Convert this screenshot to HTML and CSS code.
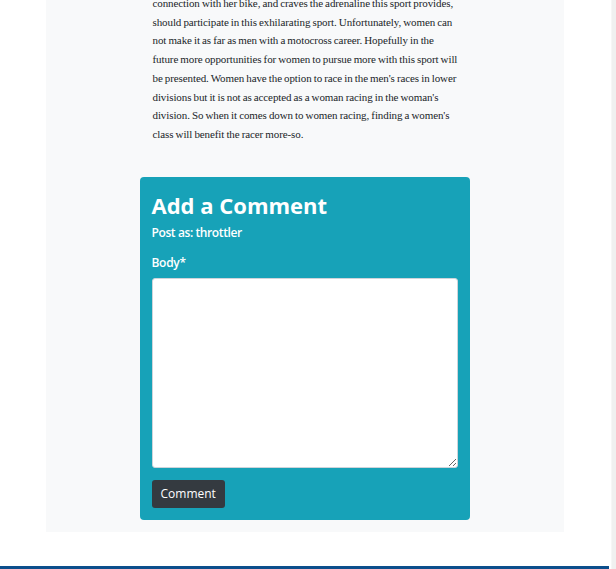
FILE: index.html
```html
<!DOCTYPE html>
<html lang="en">
<head>
<meta charset="utf-8">
<title>Article</title>
<link rel="stylesheet" href="styles.css">
</head>
<body>
<div class="page">
  <main class="panel">
    <p class="article-text">connection with her bike, and craves the adrenaline this sport provides, should participate in this exhilarating sport. Unfortunately, women can not make it as far as men with a motocross career. Hopefully in the future more opportunities for women to pursue more with this sport will be presented. Women have the option to race in the men's races in lower divisions but it is not as accepted as a woman racing in the woman's division. So when it comes down to women racing, finding a women's class will benefit the racer more-so.</p>
    <form class="comment-card">
      <h2 class="comment-title">Add a Comment</h2>
      <p class="comment-user">Post as: throttler</p>
      <label class="comment-label" for="body">Body*</label>
      <textarea id="body" class="comment-body"></textarea>
      <button type="button" class="comment-btn">Comment</button>
    </form>
  </main>
  <footer class="footer"></footer>
</div>
<div class="edge"></div>
</body>
</html>
```
FILE: styles.css
```css
html, body {
  margin: 0;
  padding: 0;
  height: 100%;
  overflow: hidden;
}
body {
  display: flex;
  background: #ffffff;
  font-family: "Open Sans", "Noto Sans", sans-serif;
}
.page {
  width: 610px;
  display: flex;
  flex-direction: column;
  align-items: center;
}
.edge {
  width: 4px;
  margin-left: 2px;
  background: #f0f0f0;
  border-left: 1px solid #f6f6f6;
}
.panel {
  width: 518px;
  margin-top: -12px;
  background: #f8f9fa;
  display: flex;
  flex-direction: column;
  align-items: center;
  padding: 6px 0 12px;
}
.article-text {
  width: 308px;
  margin: 0 0 33px 4px;
  font-family: "Liberation Serif", "Times New Roman", serif;
  font-size: 11px;
  letter-spacing: -0.1px;
  word-spacing: -0.5px;
  line-height: 18.7px;
  color: #212529;
}
.comment-card {
  width: 330px;
  box-sizing: border-box;
  background: #17a2b8;
  border-radius: 4px;
  padding: 13px 12px 12px;
  display: flex;
  flex-direction: column;
  align-items: flex-start;
  color: #ffffff;
}
.comment-title {
  margin: 0 0 3px;
  font-size: 22px;
  line-height: 30px;
  font-weight: 700;
}
.comment-user {
  margin: 0 0 10px;
  font-size: 12px;
  letter-spacing: -0.4px;
  line-height: 20px;
  font-weight: 600;
}
.comment-label {
  font-size: 12px;
  letter-spacing: -0.3px;
  line-height: 20px;
  font-weight: 600;
}
.comment-body {
  margin-top: 5px;
  width: 306px;
  height: 190px;
  box-sizing: border-box;
  border: 1px solid #ced4da;
  border-radius: 3px;
  background: #ffffff;
  resize: vertical;
}
.comment-btn {
  margin-top: 12px;
  height: 28px;
  padding: 0 9px;
  border: none;
  border-radius: 3px;
  background: #343a40;
  color: #ffffff;
  font-family: "Open Sans", "Noto Sans", sans-serif;
  font-size: 12px;
  font-weight: 500;
}
.footer {
  margin-top: auto;
  width: 100%;
  height: 3px;
  background: #0c4e8c;
}
```
